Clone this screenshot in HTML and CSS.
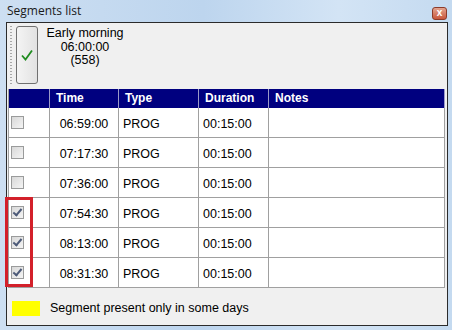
FILE: index.html
```html
<!DOCTYPE html>
<html lang="en">
<head>
    <meta charset="UTF-8">
    <title>Segments list</title>
    <link rel="stylesheet" href="styles.css">
</head>
<body>
    <div class="window">
        <div class="titlebar">
            <span class="title">Segments list</span>
            <span class="close">x</span>
        </div>

        <div class="panel">
            <!-- Toolbar -->
            <div class="toolbar">
                <div class="grip"></div>
                <div class="ok-button">
                    <svg width="12" height="12" viewBox="0 0 12 12">
                        <path d="M1 6.5 L4.5 10.5 L11 1.5" fill="none" stroke="#1f8c1f" stroke-width="1.8"/>
                    </svg>
                </div>
                <div class="info">
                    <div>Early morning</div>
                    <div>06:00:00</div>
                    <div>(558)</div>
                </div>
            </div>

            <!-- Segments grid -->
            <div class="grid">
                <div class="hd"></div>
                <div class="hd">Time</div>
                <div class="hd">Type</div>
                <div class="hd">Duration</div>
                <div class="hd">Notes</div>

                <div class="cell chk"><span class="box"></span></div>
                <div class="cell time">06:59:00</div>
                <div class="cell">PROG</div>
                <div class="cell">00:15:00</div>
                <div class="cell"></div>

                <div class="cell chk"><span class="box"></span></div>
                <div class="cell time">07:17:30</div>
                <div class="cell">PROG</div>
                <div class="cell">00:15:00</div>
                <div class="cell"></div>

                <div class="cell chk"><span class="box"></span></div>
                <div class="cell time">07:36:00</div>
                <div class="cell">PROG</div>
                <div class="cell">00:15:00</div>
                <div class="cell"></div>

                <div class="cell chk"><span class="box checked"></span></div>
                <div class="cell time">07:54:30</div>
                <div class="cell">PROG</div>
                <div class="cell">00:15:00</div>
                <div class="cell"></div>

                <div class="cell chk"><span class="box checked"></span></div>
                <div class="cell time">08:13:00</div>
                <div class="cell">PROG</div>
                <div class="cell">00:15:00</div>
                <div class="cell"></div>

                <div class="cell chk"><span class="box checked"></span></div>
                <div class="cell time">08:31:30</div>
                <div class="cell">PROG</div>
                <div class="cell">00:15:00</div>
                <div class="cell"></div>
            </div>

            <!-- Legend -->
            <div class="legend">
                <span class="swatch"></span>
                <span>Segment present only in some days</span>
            </div>
        </div>

        <!-- annotation drawn over the checkboxes -->
        <div class="highlight"></div>
    </div>
</body>
</html>
```

FILE: styles.css
```css
body {
    margin: 0;
    font-family: "Liberation Sans", Arial, sans-serif;
    font-size: 12px;
    color: #000;
}

.window {
    position: relative;
    width: 452px;
    height: 330px;
    box-sizing: border-box;
    padding: 0 4px 4px 6px;
    background: linear-gradient(to right, #cddff2, #bdd5ee 45%, #d3e4f5 75%, #c4daf0);
}

.titlebar {
    height: 22px;
    display: flex;
    align-items: center;
    justify-content: space-between;
}

.title {
    font-family: "Open Sans", "Liberation Sans", sans-serif;
    font-size: 12px;
    margin-left: 1px;
    margin-top: -2px;
    color: #1a1a1a;
}

.close {
    width: 13px;
    height: 11px;
    margin-right: 1px;
    margin-top: 4px;
    border: 1px solid #8c3b2a;
    border-radius: 3px;
    background: linear-gradient(#e3a48f, #c9573c);
    color: #fff;
    font-weight: bold;
    font-size: 10px;
    line-height: 10px;
    text-align: center;
}

.panel {
    height: 304px;
    box-sizing: border-box;
    border: 1px solid #2b2b2b;
    background: #f0f0f0;
}

.toolbar {
    height: 66px;
    display: flex;
    align-items: flex-start;
}

.grip {
    width: 2px;
    height: 60px;
    margin: 3px 0 0 3px;
    background: repeating-linear-gradient(#a8a8a8 0 1px, transparent 1px 3px);
}

.ok-button {
    width: 20px;
    height: 56px;
    margin: 3px 0 0 4px;
    border: 1px solid #707070;
    border-radius: 3px;
    background: linear-gradient(to right, #f4f4f4, #e2e2e2);
    display: flex;
    align-items: center;
    justify-content: center;
}

.info {
    width: 80px;
    margin: 4px 0 0 7px;
    text-align: center;
    white-space: nowrap;
    line-height: 13.5px;
    font-size: 12.5px;
}

.grid {
    margin-left: 1px;
    width: 437px;
    display: grid;
    grid-template-columns: 41px 69px 80px 70px 176px;
    grid-template-rows: 19px repeat(6, 30px);
    border-left: 1px solid #a0a0a0;
    box-sizing: border-box;
    background: #fff;
}

.hd {
    background: #00007f;
    color: #fff;
    font-weight: bold;
    padding-left: 6px;
    line-height: 19px;
    border-right: 1px solid #9b9bc8;
}

.hd:last-child {
    border-right: 1px solid #a0a0a0;
}

.cell {
    border-right: 1px solid #a0a0a0;
    border-bottom: 1px solid #a0a0a0;
    padding-left: 4px;
    padding-top: 2px;
    box-sizing: border-box;
    display: flex;
    align-items: center;
    font-size: 12.5px;
}

.time {
    justify-content: center;
    padding-left: 0;
}

.chk {
    padding-left: 2px;
    padding-top: 0;
}

.box {
    width: 11px;
    height: 11px;
    border: 1px solid #9a9b9b;
    background: linear-gradient(135deg, #d8d8d8, #f4f4f4);
    position: relative;
}

.box.checked::after {
    content: "";
    position: absolute;
    left: 3px;
    top: 0px;
    width: 3px;
    height: 7px;
    border: solid #4c5a78;
    border-width: 0 2px 2px 0;
    transform: rotate(40deg);
}

.legend {
    height: 37px;
    display: flex;
    align-items: center;
    padding-left: 5px;
    padding-top: 3px;
    box-sizing: border-box;
    font-size: 12.5px;
}

.swatch {
    width: 28px;
    height: 15px;
    background: #ffff00;
    margin-right: 10px;
}

.highlight {
    position: absolute;
    left: 5px;
    top: 197px;
    width: 22px;
    height: 84px;
    border: 3px solid #d3202a;
}
```
